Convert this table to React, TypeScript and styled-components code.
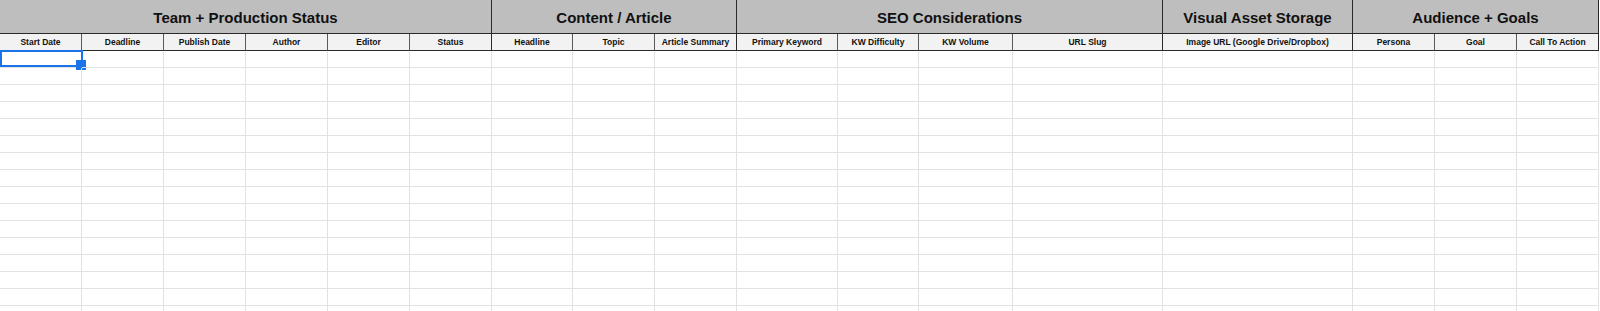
import React from "react";
import styled, { createGlobalStyle } from "styled-components";

const Global = createGlobalStyle`
  html, body { margin: 0; padding: 0; background: #ffffff; }
  body { font-family: "Liberation Sans", Arial, sans-serif; overflow: hidden; }
`;

const widths = [82, 82, 82, 82, 82, 82, 81, 82, 82, 101, 81, 94, 150, 190, 82, 82, 82];

const groups: { title: string; span: number }[] = [
  { title: "Team + Production Status", span: 6 },
  { title: "Content / Article", span: 3 },
  { title: "SEO Considerations", span: 4 },
  { title: "Visual Asset Storage", span: 1 },
  { title: "Audience + Goals", span: 3 },
];

const columns = [
  "Start Date",
  "Deadline",
  "Publish Date",
  "Author",
  "Editor",
  "Status",
  "Headline",
  "Topic",
  "Article Summary",
  "Primary Keyword",
  "KW Difficulty",
  "KW Volume",
  "URL Slug",
  "Image URL (Google Drive/Dropbox)",
  "Persona",
  "Goal",
  "Call To Action",
];

const Sheet = styled.div`
  display: grid;
  grid-template-columns: ${widths.map((w) => `${w}px`).join(" ")};
  grid-template-rows: 34px 17px;
  grid-auto-rows: 17px;
  width: ${widths.reduce((a, b) => a + b, 0)}px;
`;

const GroupCell = styled.div<{ $span: number }>`
  grid-column: span ${(p) => p.$span};
  height: 34px;
  box-sizing: border-box;
  background: #bebebe;
  border-right: 1px solid #2a2a2a;
  border-bottom: 1px solid #2a2a2a;
  display: flex;
  align-items: center;
  justify-content: center;
  font-weight: bold;
  font-size: 15px;
  color: #111;
  padding-top: 1px;
  white-space: nowrap;
`;

const HeadCell = styled.div<{ $groupEnd: boolean }>`
  box-sizing: border-box;
  height: 17px;
  background: #f2f2f2;
  border-right: 1px solid ${(p) => (p.$groupEnd ? "#2a2a2a" : "#5a5a5a")};
  border-bottom: 1px solid #2a2a2a;
  display: flex;
  align-items: center;
  justify-content: center;
  font-weight: bold;
  font-size: 8.5px;
  color: #111;
  white-space: nowrap;
  overflow: hidden;
`;

const DataCell = styled.div`
  position: relative;
  box-sizing: border-box;
  height: 17px;
  border-right: 1px solid #e2e2e2;
  border-bottom: 1px solid #e2e2e2;
`;

const Selection = styled.div`
  position: absolute;
  left: 0;
  top: -1px;
  width: 83px;
  height: 17px;
  box-sizing: border-box;
  border: 2px solid #1a73e8;
  pointer-events: none;
`;

const Handle = styled.div`
  position: absolute;
  left: 76px;
  top: 9px;
  width: 10px;
  height: 10px;
  background: #1a73e8;
`;

const groupEnds = new Set<number>();
{
  let acc = 0;
  groups.forEach((g) => {
    acc += g.span;
    groupEnds.add(acc - 1);
  });
}

const ROWS = 16;

export default function App() {
  return (
    <>
      <Global />
      <Sheet>
        {groups.map((g) => (
          <GroupCell key={g.title} $span={g.span}>
            {g.title}
          </GroupCell>
        ))}
        {columns.map((c, i) => (
          <HeadCell key={c} $groupEnd={groupEnds.has(i)}>
            {c}
          </HeadCell>
        ))}
        {Array.from({ length: ROWS }).flatMap((_, r) =>
          columns.map((c, i) => (
            <DataCell key={`${r}-${i}`}>
              {r === 0 && i === 0 && (
                <>
                  <Selection />
                  <Handle />
                </>
              )}
            </DataCell>
          ))
        )}
      </Sheet>
    </>
  );
}
